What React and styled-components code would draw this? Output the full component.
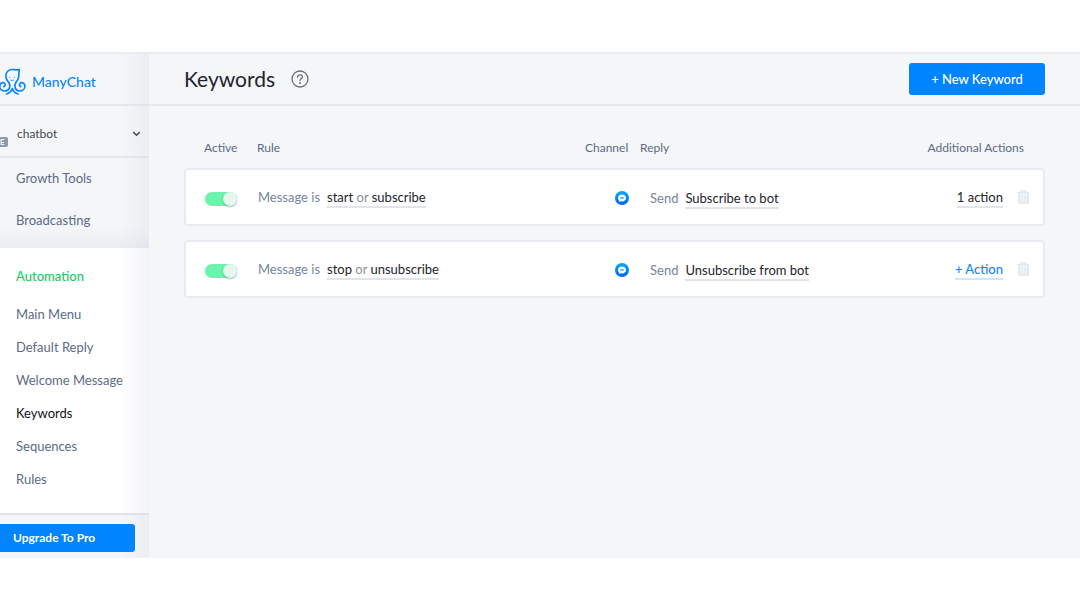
import React, { useState } from "react";
import styled, { createGlobalStyle } from "styled-components";

const Global = createGlobalStyle`
  *, *::before, *::after { box-sizing: border-box; }
  body {
    margin: 0;
    background: #fff;
    font-family: Lato, "Liberation Sans", sans-serif;
    font-size: 13px;
    line-height: 20px;
    color: #5b6b86;
  }
  button { font: inherit; border: 0; cursor: pointer; }
  a { color: inherit; text-decoration: none; }
`;

const Shell = styled.div`
  display: grid;
  grid-template-columns: 149px 1fr;
  margin: 52px 0;
  border-top: 2px solid #ebedf0;
  background: #f5f6f8;
`;

const Sidebar = styled.aside`
  position: relative;
  &::after {
    content: "";
    position: absolute;
    inset: 0 0 0 auto;
    width: 30px;
    background: linear-gradient(to right, rgba(205, 209, 222, 0), rgba(205, 209, 222, 0.24));
    pointer-events: none;
  }
`;

const Brand = styled.a`
  display: flex;
  align-items: center;
  gap: 6px;
  height: 52px;
  padding-top: 6px;
  border-bottom: 2px solid #e4e7ec;
  color: #0c86ff;
  font-size: 14px;
  font-weight: 500;
`;

const AccountButton = styled.button`
  display: flex;
  align-items: center;
  width: 100%;
  height: 52px;
  padding: 6px 8px 0 0;
  border-bottom: 2px solid #e4e7ec;
  background: transparent;
  color: #3f4756;
  font-size: 12px;
  text-align: left;
`;

const PlanTag = styled.span`
  width: 8px;
  height: 10px;
  margin: 16px 9px 0 0;
  border-radius: 0 2px 2px 0;
  background: #8d98aa;
  color: #fff;
  font-size: 8px;
  font-weight: 700;
  line-height: 10px;
`;

const AccountName = styled.span`
  flex: 1;
`;

const TopNav = styled.nav`
  display: flex;
  flex-direction: column;
  gap: 22px;
  height: 90px;
  padding: 10px 16px 0;
  background: linear-gradient(to top, #ebecf1, #f5f6f8 20px);
`;

const SubNav = styled.nav`
  display: flex;
  flex-direction: column;
  gap: 13px;
  padding: 18px 16px 24px;
  background: #fff;
`;

const NavLink = styled.a`
  color: ${(p) => (p.$active ? "#101216" : "#5b6b86")};
`;

const NavHeading = styled.a`
  margin-bottom: 5px;
  color: #13ce66;
  font-weight: 500;
`;

const Upgrade = styled.div`
  padding: 9px 14px 6px 0;
  border-top: 2px solid #e1e4ea;
`;

const UpgradeButton = styled.button`
  position: relative;
  z-index: 1;
  display: block;
  width: 100%;
  height: 28px;
  padding: 0 13px;
  border-radius: 0 3px 3px 0;
  background: #0084ff;
  color: #fff;
  font-size: 12px;
  font-weight: 700;
  text-align: left;
`;

const Header = styled.header`
  display: flex;
  align-items: center;
  gap: 16px;
  height: 52px;
  padding: 0 35px;
  border-bottom: 2px solid #e4e7ec;
`;

const Title = styled.h1`
  margin: 0;
  color: #1e2430;
  font-size: 21px;
  font-weight: 400;
  line-height: 28px;
`;

const IconButton = styled.button`
  display: flex;
  padding: 0;
  background: transparent;
`;

const NewButton = styled.button`
  width: 136px;
  height: 32px;
  margin-left: auto;
  border-radius: 3px;
  background: #0084ff;
  color: #fff;
  font-weight: 500;
`;

const Content = styled.section`
  padding: 22px 35px;
`;

const Table = styled.table`
  width: 100%;
  table-layout: fixed;
  border-collapse: separate;
  border-spacing: 0 14px;
`;

const Th = styled.th`
  width: ${(p) => p.$w || "auto"};
  padding: ${(p) => p.$pad || "0"};
  font-size: 12px;
  font-weight: 400;
  line-height: 12px;
  text-align: ${(p) => p.$align || "left"};
  white-space: nowrap;
`;

const Td = styled.td`
  height: 58px;
  padding: ${(p) => p.$pad || "0"};
  border: solid #e8ebf0;
  border-width: 2px 0;
  background: #fff;
  vertical-align: middle;
  &:first-child { border-left-width: 2px; border-radius: 4px 0 0 4px; }
  &:last-child { border-right-width: 2px; border-radius: 0 4px 4px 0; }
`;

const Line = styled.div`
  display: flex;
  align-items: center;
  justify-content: ${(p) => (p.$end ? "flex-end" : "flex-start")};
  gap: ${(p) => p.$gap || "7px"};
  color: #7685a0;
`;

const Editable = styled.button`
  padding: 2px 0 0;
  border-bottom: 2px solid ${(p) => (p.$accent ? "#cfe6ff" : "#e1e5eb")};
  background: transparent;
  color: ${(p) => (p.$accent ? "#0c86ff" : "#22252b")};
  font-weight: ${(p) => (p.$accent ? 500 : 400)};
  line-height: 18px;
`;

const Or = styled.span`
  color: #8a8f99;
`;

const Toggle = styled.input`
  appearance: none;
  display: block;
  width: 32px;
  height: 14px;
  margin: 4px 0 0;
  border-radius: 7px;
  background: ${(p) => (p.checked ? "#6df3ab" : "#d5dae2")};
  cursor: pointer;
  &::before {
    content: "";
    display: block;
    width: 14px;
    height: 14px;
    margin-left: ${(p) => (p.checked ? "18px" : "0")};
    border-radius: 50%;
    background: #e6f7ee;
    box-shadow: 0 1px 2px rgba(30, 90, 60, 0.4);
  }
`;

const Octopus = () => (
  <svg width="26" height="28" viewBox="0 0 26 28" fill="none" stroke="#0c86ff" strokeWidth="1.7" strokeLinecap="round" strokeLinejoin="round">
    <path d="M8.8 14.5C6.800 12.500 5.800 10.500 5.800 8C5.800 4 8.800 1.500 12 1.500C14.500 1.500 16.500 2.300 19.300 1.500C18.700 4 19 5.500 18.800 8C18.600 10.500 17.800 12.500 15.800 14.500" />
    <path d="M8.800 14.500C11 18 9.500 23 4.800 23C2 23 -0.300 21 -0.300 18.300C-0.300 15.800 1.600 14.300 3.400 14.600C5.600 15 5.800 18 3.800 18.600" />
    <path d="M15.800 14.500C13.600 18 15.100 23 19.800 23C22.600 23 24.900 21 24.900 18.300C24.900 15.800 23 14.300 21.200 14.600C19 15 18.800 18 20.800 18.600" />
    <path d="M12.300 20.500C11.300 23.500 9.500 25.300 6.500 26M12.300 20.500C13.300 23.500 15.100 25.300 18.100 26" />
    <path d="M9.900 9.300V9.400M14.500 9.300V9.400M11 12.200Q12.200 13 13.400 12.200" strokeWidth="1" />
  </svg>
);

const Chevron = () => (
  <svg width="9" height="6" viewBox="0 0 9 6" fill="none" stroke="#2c3340" strokeWidth="1.500">
    <path d="M1.200 1L4.500 4.300L7.800 1" />
  </svg>
);

const Help = () => (
  <svg width="18" height="18" viewBox="0 0 18 18" fill="none" stroke="#666c78" strokeWidth="1.300" strokeLinecap="round">
    <circle cx="9" cy="9" r="8" />
    <path d="M6.600 7.200C6.600 5.700 7.600 4.800 9 4.800C10.400 4.800 11.400 5.700 11.400 6.900C11.400 8.600 9 8.600 9 10.500" />
    <circle cx="9" cy="13" r="0.400" />
  </svg>
);

const Messenger = () => (
  <svg width="14" height="14" viewBox="0 0 14 14" role="img" aria-label="Messenger">
    <defs>
      <linearGradient id="ring" x1="0" y1="0" x2="0" y2="1">
        <stop offset="0" stopColor="#00aaff" />
        <stop offset="1" stopColor="#0062ff" />
      </linearGradient>
    </defs>
    <circle cx="7" cy="7" r="7" fill="url(#ring)" />
    <path d="M7 3.400C4.700 3.400 3 4.900 3 6.900C3 8 3.500 9 4.300 9.600V11.200L5.900 10.300C6.200 10.400 6.600 10.400 7 10.400C9.300 10.400 11 8.900 11 6.900C11 4.900 9.300 3.400 7 3.400Z" fill="#fff" />
    <path d="M5.300 7.300L6.500 6.700L7.500 7.200L8.700 6.600" fill="none" stroke="#1b86ff" strokeWidth="1.200" strokeLinejoin="round" />
  </svg>
);

const Trash = () => (
  <svg width="13" height="14" viewBox="0 0 13 14" fill="none" stroke="#dde3eb" strokeWidth="1.400">
    <path d="M0.500 2.900H12.500M4.400 2.500V0.900H8.600V2.500" />
    <path d="M2 3.200V13.100H11V3.200" fill="#eff2f6" />
    <path d="M5 5.200V11.200M8 5.200V11.200" strokeWidth="0.800" />
  </svg>
);

const links = ["Main Menu", "Default Reply", "Welcome Message", "Keywords", "Sequences", "Rules"];

const keywords = [
  { words: ["start", "subscribe"], reply: "Subscribe to bot", action: "1 action" },
  { words: ["stop", "unsubscribe"], reply: "Unsubscribe from bot", action: "+ Action", accent: true },
];

function KeywordRow({ item }) {
  const [on, setOn] = useState(true);
  return (
    <tr>
      <Td $pad="0 0 0 19px">
        <Toggle type="checkbox" role="switch" aria-label={`Active: ${item.words[0]}`} checked={on} onChange={() => setOn(!on)} />
      </Td>
      <Td $pad="0 0 0 1px">
        <Line>
          <span>Message is</span>
          <Editable>{item.words[0]} <Or>or</Or> {item.words[1]}</Editable>
        </Line>
      </Td>
      <Td $pad="2px 0 0 30px"><Line><Messenger /></Line></Td>
      <Td $pad="2px 0 0 10px">
        <Line>
          <span>Send</span>
          <Editable>{item.reply}</Editable>
        </Line>
      </Td>
      <Td $pad="0 13px 0 0">
        <Line $end $gap="14px">
          <Editable $accent={item.accent}>{item.action}</Editable>
          <IconButton aria-label="Delete keyword"><Trash /></IconButton>
        </Line>
      </Td>
    </tr>
  );
}

export default function App() {
  return (
    <>
      <Global />
      <Shell>
        <Sidebar>
          <Brand href="#"><Octopus />ManyChat</Brand>
          <AccountButton>
            <PlanTag>E</PlanTag>
            <AccountName>chatbot</AccountName>
            <Chevron />
          </AccountButton>
          <TopNav>
            <NavLink href="#">Growth Tools</NavLink>
            <NavLink href="#">Broadcasting</NavLink>
          </TopNav>
          <SubNav>
            <NavHeading href="#">Automation</NavHeading>
            {links.map((l) => (
              <NavLink key={l} href="#" $active={l === "Keywords"}>{l}</NavLink>
            ))}
          </SubNav>
          <Upgrade><UpgradeButton>Upgrade To Pro</UpgradeButton></Upgrade>
        </Sidebar>
        <main>
          <Header>
            <Title>Keywords</Title>
            <IconButton aria-label="Help"><Help /></IconButton>
            <NewButton>+ New Keyword</NewButton>
          </Header>
          <Content>
            <Table>
              <thead>
                <tr>
                  <Th $w="73px" $pad="0 0 0 20px">Active</Th>
                  <Th>Rule</Th>
                  <Th $w="55px">Channel</Th>
                  <Th $w="250px">Reply</Th>
                  <Th $w="155px" $align="right" $pad="0 21px 0 0">Additional Actions</Th>
                </tr>
              </thead>
              <tbody>
                {keywords.map((k) => <KeywordRow key={k.reply} item={k} />)}
              </tbody>
            </Table>
          </Content>
        </main>
      </Shell>
    </>
  );
}
